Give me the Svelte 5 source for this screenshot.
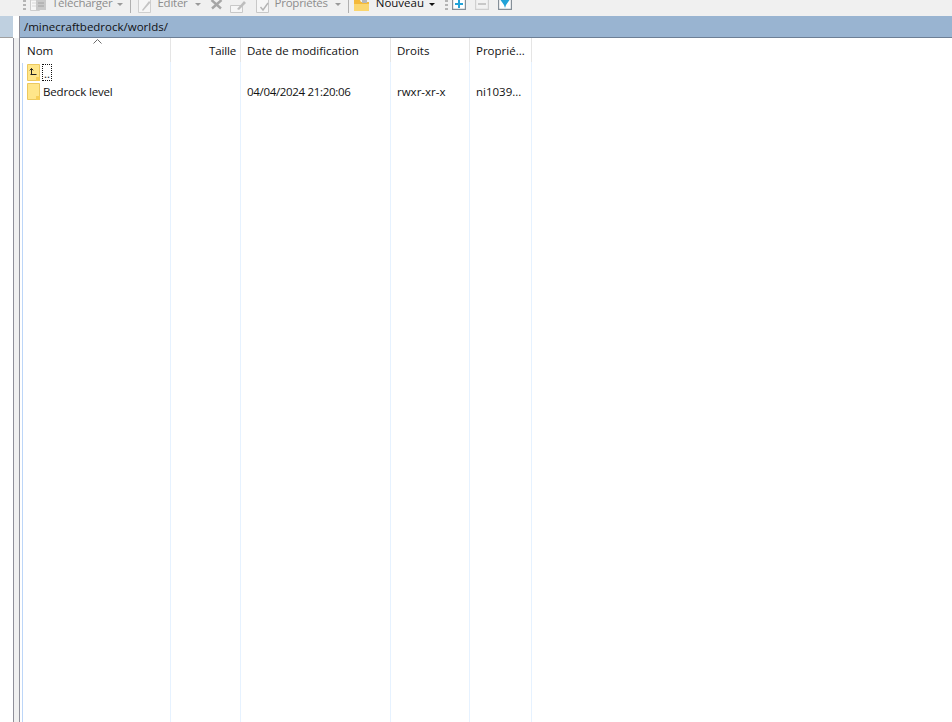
<script>
  const columns = [
    { name: "Nom", width: 150, cls: "" },
    { name: "Taille", width: 70, cls: "right" },
    { name: "Date de modification", width: 150, cls: "" },
    { name: "Droits", width: 79, cls: "" },
    { name: "Proprié...", width: 62, cls: "" },
  ];
  const entry = { name: "Bedrock level", date: "04/04/2024 21:20:06", rights: "rwxr-xr-x", owner: "ni1039..." };
</script>

<div class="window">
  <div class="toolbar">
    <div class="grip"></div>
    <svg class="tb-icon" style="margin-left:4px" width="17" height="14" viewBox="0 0 17 14">
      <path d="M.5 0v10.500h9V0z" fill="#f6f6f6" stroke="#cdcdcd" />
      <path d="M2 3h5M2 6h5" stroke="#d8d8d8" />
      <path d="M6 0v10h10V0z" fill="#c9c9c9" />
      <path d="M8 3h6M8 6h6" stroke="#a2a2a2" />
    </svg>
    <span class="label" style="margin-left:5px">Télécharger</span>
    <span class="arrow" style="margin-left:5px"></span>
    <div class="sep" style="margin-left:7px"></div>
    <svg class="tb-icon" style="margin-left:7px" width="14" height="14" viewBox="0 0 14 14">
      <path d="M.5 0v12.500h12V0" fill="#f6f6f6" stroke="#cfcfcf" />
      <path d="M4 10 11 1l1.500 1.500L5 11z" fill="#c4c4c4" />
    </svg>
    <span class="label" style="margin-left:5px">Éditer</span>
    <span class="arrow" style="margin-left:7px"></span>
    <svg class="tb-icon" style="margin-left:9px" width="13" height="12" viewBox="0 0 13 12">
      <path d="M1.500 0 11 8.500M11.500 0 2 8.500" stroke="#a6a6a6" stroke-width="2.400" fill="none" />
    </svg>
    <svg class="tb-icon" style="margin-left:7px" width="19" height="13" viewBox="0 0 19 13">
      <path d="M.5 5.500h12v7H.5z" fill="#f6f6f6" stroke="#c8c8c8" />
      <path d="M7 9 14 1l2 2-7 7z" fill="#bdbdbd" />
    </svg>
    <svg class="tb-icon" style="margin-left:7px" width="16" height="13" viewBox="0 0 16 13">
      <path d="M.5 0v12.500h12V0" fill="#f6f6f6" stroke="#c8c8c8" />
      <path d="M4.500 7 7 10l5-7" stroke="#b4b4b4" stroke-width="1.400" fill="none" />
    </svg>
    <span class="label" style="margin-left:3px">Propriétés</span>
    <span class="arrow" style="margin-left:7px"></span>
    <div class="sep" style="margin-left:7px"></div>
    <svg class="tb-icon" style="margin-left:5px" width="15" height="13" viewBox="0 0 15 13">
      <path d="M0 0h6l1 2h8v9H0z" fill="#f4b93a" />
      <path d="M0 4h15v7H0z" fill="#fbd66e" />
      <path d="M8 0h5v3H8z" fill="#b8b8b8" />
    </svg>
    <span class="label active" style="margin-left:7px">Nouveau</span>
    <span class="arrow dark" style="margin-left:5px"></span>
    <div class="grip" style="margin-left:10px"></div>
    <svg class="tb-icon" style="margin-left:4px" width="14" height="14" viewBox="0 0 14 14">
      <path d="M.6 0v9.400h12.800V0" fill="#fff" stroke="#858f98" stroke-width="1.200" />
      <path d="M7 0v8M3 4h8" stroke="#22a3d8" stroke-width="2" fill="none" />
    </svg>
    <svg class="tb-icon" style="margin-left:9px" width="14" height="14" viewBox="0 0 14 14">
      <path d="M.6 0v9.400h12.800V0" fill="#f2f2f2" stroke="#d0d0d0" stroke-width="1.200" />
      <path d="M3 4h8" stroke="#c8c8c8" stroke-width="2" fill="none" />
    </svg>
    <svg class="tb-icon" style="margin-left:9px" width="14" height="14" viewBox="0 0 14 14">
      <path d="M.6 0v9.400h12.800V0" fill="#fff" stroke="#858f98" stroke-width="1.200" />
      <path d="M2.500 0h9L8 5 7 8 6 5z" fill="#22a3d8" />
    </svg>
  </div>

  <div class="main">
    <div class="side">
      <div class="side-head"></div>
      <div class="side-body"><div class="gutter"></div></div>
    </div>

    <div class="pane">
      <div class="path">/minecraftbedrock/worlds/</div>
      <div class="list">
        <div class="head">
          {#each columns as col}
            <div class="cell {col.cls}" style="width:{col.width}px">{col.name}</div>
          {/each}
          <svg class="sort" width="9" height="5" viewBox="0 0 9 5">
            <path d="M.5 4.500 4.500 .5l4 4" stroke="#6a6a6a" fill="none" />
          </svg>
        </div>
        <div class="rows">
          <div class="row">
            <div class="cell name" style="width:150px">
              <svg class="folder" width="13" height="17" viewBox="0 0 13 17">
                <path d="M.5 .5h12v16H.5z" fill="#ffe68a" stroke="#ecc95f" />
                <path d="M9 13h4v4H9z" fill="#f7cf58" />
                <path d="M3.500 10.500h6M4.500 10V4.500M2.800 6.300 4.500 4.500l1.700 1.800" stroke="#222" fill="none" />
              </svg>
              <span class="dots">..</span>
            </div>
          </div>
          <div class="row">
            <div class="cell name" style="width:150px">
              <svg class="folder" width="13" height="17" viewBox="0 0 13 17">
                <path d="M.5 .5h12v16H.5z" fill="#ffe68a" stroke="#ecc95f" />
                <path d="M9 13h4v4H9z" fill="#f7cf58" />
              </svg>
              <span class="fname">{entry.name}</span>
            </div>
            <div class="cell" style="width:70px"></div>
            <div class="cell date" style="width:150px">{entry.date}</div>
            <div class="cell" style="width:79px">{entry.rights}</div>
            <div class="cell" style="width:62px">{entry.owner}</div>
          </div>
        </div>
        <div class="lines">
          {#each columns as col}
            <div class="line" style="width:{col.width}px"></div>
          {/each}
        </div>
      </div>
    </div>
  </div>
</div>

<style>
  :global(body) {
    margin: 0;
    background: #fff;
  }

  .window {
    width: 952px;
    height: 722px;
    overflow: hidden;
    display: flex;
    flex-direction: column;
    font-family: "Open Sans", "Noto Sans", sans-serif;
    font-size: 11.5px;
    color: #111;
  }

  .toolbar {
    height: 16px;
    flex: none;
    box-sizing: border-box;
    background: #f0f0f0;
    padding-left: 23px;
    display: flex;
    align-items: flex-start;
    overflow: hidden;
  }

  .grip {
    width: 3px;
    height: 11px;
    flex: none;
    background: repeating-linear-gradient(#b4b4b4 0 2px, transparent 2px 4px);
  }

  .sep {
    width: 1px;
    height: 13px;
    flex: none;
    background: #b0b0b0;
  }

  .tb-icon {
    display: block;
    flex: none;
  }

  .label {
    line-height: 12px;
    margin-top: -3px;
    height: 12px;
    color: #8d8d8d;
    white-space: nowrap;
    letter-spacing: -0.25px;
  }

  .label.active {
    color: #111;
    letter-spacing: 0;
  }

  .arrow {
    width: 0;
    height: 0;
    flex: none;
    margin-top: 3px;
    border-left: 3px solid transparent;
    border-right: 3px solid transparent;
    border-top: 3px solid #9a9a9a;
  }

  .arrow.dark {
    border-top-color: #111;
  }

  .main {
    flex: 1;
    display: flex;
    min-height: 0;
  }

  .side {
    width: 19px;
    flex: none;
    display: flex;
    flex-direction: column;
  }

  .side-head {
    height: 21px;
    width: 13px;
    flex: none;
    background: #bfd0e0;
    border-bottom: 1px solid #a0a0a0;
  }

  .side-body {
    flex: 1;
    display: flex;
    justify-content: flex-end;
  }

  .gutter {
    width: 5px;
    background: #f0f0f0;
    border-left: 1px solid #8f8f99;
  }

  .pane {
    flex: 1;
    display: flex;
    flex-direction: column;
    min-width: 0;
    border-left: 1px solid #8f8f99;
  }

  .path {
    height: 22px;
    flex: none;
    box-sizing: border-box;
    background: #99b4d1;
    border-bottom: 1px solid #6d7f95;
    padding-left: 4px;
    line-height: 21px;
    color: #111;
  }

  .list {
    flex: 1;
    position: relative;
    background: #fff;
  }

  .head {
    display: flex;
    height: 24px;
    padding-left: 1px;
    position: relative;
  }

  .head .cell {
    box-sizing: border-box;
    line-height: 26px;
    border-right: 1px solid #e5e5e5;
  }

  .head .right {
    padding-right: 4px;
    letter-spacing: -0.15px;
  }

  .sort {
    position: absolute;
    left: 73px;
    top: 1px;
  }

  .cell {
    flex: none;
    box-sizing: border-box;
    padding-left: 6px;
    padding-right: 4px;
    white-space: nowrap;
    overflow: hidden;
  }

  .cell.right {
    text-align: right;
  }

  .date {
    letter-spacing: -0.32px;
  }

  .rows {
    padding-top: 1px;
    padding-left: 1px;
  }

  .row {
    display: flex;
    height: 19px;
    line-height: 19px;
  }

  .name {
    display: flex;
    align-items: center;
    padding-left: 6px;
    padding-right: 0;
  }

  .folder {
    flex: none;
    display: block;
  }

  .dots {
    margin-left: 2px;
    width: 10px;
    height: 17px;
    box-sizing: border-box;
    border: 1px dotted #111;
    line-height: 17px;
    padding-left: 1px;
  }

  .fname {
    margin-left: 3px;
    letter-spacing: -0.15px;
  }

  .lines {
    position: absolute;
    left: 1px;
    top: 24px;
    bottom: 0;
    display: flex;
    pointer-events: none;
  }

  .lines::before {
    content: "";
    position: absolute;
    left: 1px;
    top: 1px;
    bottom: 0;
    width: 1px;
    background: #bcd6f8;
  }

  .line {
    box-sizing: border-box;
    border-right: 1px solid #e6f2ff;
  }
</style>
